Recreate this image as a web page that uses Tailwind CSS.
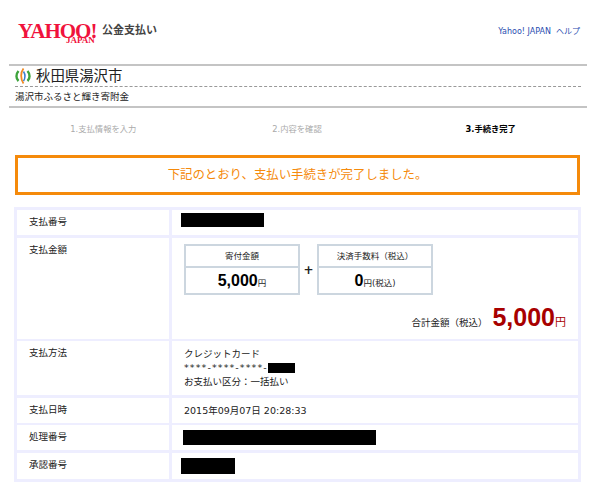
<!DOCTYPE html>
<html lang="ja">
<head>
<meta charset="utf-8">
<title>Yahoo! 公金支払い</title>
<script src="https://cdn.jsdelivr.net/npm/@tailwindcss/browser@4"></script>
</head>
<body class="bg-white w-[600px] h-[490px] overflow-hidden font-['DejaVu_Sans','Noto_Sans_CJK_JP',sans-serif] text-[9.5px] text-[#222]">
  <header class="flex items-start justify-between h-[64px] pl-[18px] pr-[20px] pt-[22px]">
    <div class="flex items-start">
      <div class="relative w-[82px] h-[24px] font-['Liberation_Serif',serif] font-bold text-[#f0123c] leading-none">
        <span class="block text-[21px] tracking-[-1px] -mt-[1px]">YAHOO!</span>
        <span class="absolute left-[48px] top-[14px] text-[9px]">JAPAN</span>
      </div>
      <span class="ml-[2px] mt-[2px] text-[11px] font-bold text-[#444] leading-[14px]">公金支払い</span>
    </div>
    <nav class="flex gap-[5px] mt-[4px] text-[8px] text-[#2a4db0] leading-[12px]">
      <a>Yahoo! JAPAN</a>
      <a>ヘルプ</a>
    </nav>
  </header>

  <section class="mx-[9px] w-[578px] h-[44px] border-y-2 border-[#c4c4c4] px-[6px]">
    <div class="flex items-center h-[21px] border-b border-dashed border-[#999]">
      <svg class="w-[16px] h-[16px]" viewBox="0 0 16 16" fill="none">
        <path d="M3.500 3C.8 6 .8 10.500 3.500 13" stroke="#3da33c" stroke-width="2.400"/>
        <path d="M12.500 3C15.200 6 15.200 10.500 12.500 13" stroke="#3da33c" stroke-width="2.400"/>
        <path d="M8.500 .5C5.400 4.500 5.400 11 8.500 15.500" stroke="#f08a24" stroke-width="1.800"/>
        <path d="M8.500 3.500C10.400 6.500 10.400 10 8.500 13" stroke="#3a7fd0" stroke-width="1.500"/>
      </svg>
      <h1 class="ml-[5px] text-[14.4px] leading-none text-[#222]">秋田県湯沢市</h1>
    </div>
    <p class="h-[20px] leading-[20px] text-[9.500px] text-[#222]">湯沢市ふるさと輝き寄附金</p>
  </section>

  <ol class="grid grid-cols-3 h-[47px] pb-[4px] items-center text-[8.300px] text-[#aaa] text-center mx-[9px] w-[578px]">
    <li class="-ml-[4px]">1.支払情報を入力</li>
    <li class="-ml-[2px]">2.内容を確認</li>
    <li class="font-bold text-black">3.手続き完了</li>
  </ol>

  <div class="mx-[15px] w-[565px] h-[40px] border-[3px] border-[#f58a0b] flex items-center justify-center text-[12.400px] text-[#f58a0b]">下記のとおり、支払い手続きが完了しました。</div>

  <div class="mt-[12px] mx-[14px] w-[567px] h-[275px] bg-[#eeeeff] p-[3px] grid grid-cols-[152px_406px] grid-rows-[25px_101px_54px_25px_25px_26px] gap-x-[3px] gap-y-[2.500px]">
    <div class="bg-white pl-[12px] pt-[5px]">支払番号</div>
    <div class="bg-white pl-[9px] pt-[3px]"><div class="w-[83px] h-[14px] bg-black"></div></div>

    <div class="bg-white pl-[12px] pt-[5px]">支払金額</div>
    <div class="bg-white">
      <div class="flex items-start pl-[12px] pt-[6px]">
        <div class="w-[116px] h-[51px] border-2 border-[#ccd6df] text-center">
          <div class="h-[22px] leading-[20px] text-[8.500px] border-b-2 border-[#ccd6df]">寄付金額</div>
          <div class="leading-[26px] text-[8.500px]"><b class="font-['Liberation_Sans',sans-serif] text-[16px] text-black">5,000</b>円</div>
        </div>
        <span class="w-[17px] mt-[20px] text-center text-[12px] font-bold leading-none">+</span>
        <div class="w-[116px] h-[51px] border-2 border-[#ccd6df] text-center">
          <div class="h-[22px] leading-[20px] text-[8.500px] border-b-2 border-[#ccd6df]">決済手数料（税込）</div>
          <div class="leading-[26px] text-[8.500px]"><b class="font-['Liberation_Sans',sans-serif] text-[16px] text-black">0</b>円(税込)</div>
        </div>
      </div>
      <p class="flex items-baseline justify-end pr-[12px] mt-[7px] text-[9.500px]">
        <span>合計金額（税込）</span><b class="ml-[5px] font-['Liberation_Sans',sans-serif] text-[25px] leading-[30px] text-[#a80000]">5,000</b><span class="text-[#a80000] text-[11px]">円</span>
      </p>
    </div>

    <div class="bg-white pl-[12px] pt-[5px]">支払方法</div>
    <div class="bg-white pl-[12px] pt-[6px] leading-[14px]">
      <p>クレジットカード</p>
      <p class="flex items-center h-[14px] tracking-[1.100px]">****-****-****-<span class="w-[27px] h-[10px] bg-black"></span></p>
      <p>お支払い区分：一括払い</p>
    </div>

    <div class="bg-white pl-[12px] pt-[5px]">支払日時</div>
    <div class="bg-white pl-[12px] pt-[6px]">2015年09月07日 20:28:33</div>

    <div class="bg-white pl-[12px] pt-[5px]">処理番号</div>
    <div class="bg-white pl-[11px] pt-[5px]"><div class="w-[193px] h-[15px] bg-black"></div></div>

    <div class="bg-white pl-[12px] pt-[5px]">承認番号</div>
    <div class="bg-white pl-[9px] pt-[5px]"><div class="w-[54px] h-[16px] bg-black"></div></div>
  </div>
</body>
</html>
